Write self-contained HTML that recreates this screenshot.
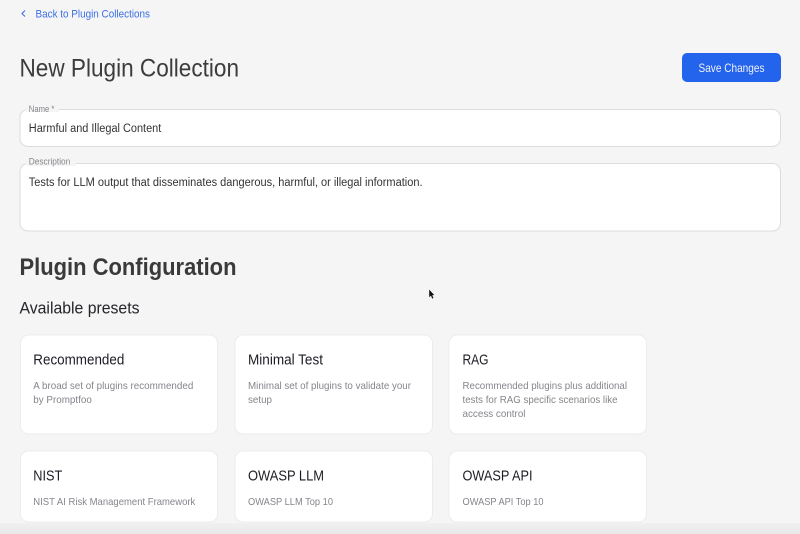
<!DOCTYPE html>
<html lang="en">
<head>
<meta charset="utf-8">
<title>New Plugin Collection</title>
<style>
html,body{margin:0;padding:0;background:#f5f5f5;width:800px;height:534px;overflow:hidden}
svg{display:block;position:absolute;left:0;top:0}
text{font-family:"Liberation Sans",sans-serif;white-space:pre}
.t{font-size:15px;fill:#1c1c24}
.d{font-size:10.5px;fill:#85858c}
.l{font-size:9px;fill:#85858a}
</style>
</head>
<body>
<svg width="800" height="534" viewBox="0 0 800 534" xmlns="http://www.w3.org/2000/svg">
<defs>
<linearGradient id="b" x1="0" y1="0" x2="0" y2="1">
<stop offset="0" stop-color="#f0f0f0"/>
<stop offset="1" stop-color="#e9e9e9"/>
</linearGradient>
</defs>
<rect width="800" height="534" fill="#f5f5f5"/>

<path d="M25 10.5 L22 13.5 L25 16.5" fill="none" stroke="#3a6fe6" stroke-width="1.1"/>
<text x="35.5" y="17.3" font-size="11" fill="#3a6fe6" textLength="114.5" lengthAdjust="spacingAndGlyphs">Back to Plugin Collections</text>

<text x="19.5" y="76.5" font-size="25" fill="#3c3c3c" textLength="219.5" lengthAdjust="spacingAndGlyphs">New Plugin Collection</text>

<rect x="682" y="53" width="99" height="29" rx="5" fill="#2463eb"/>
<text x="698.5" y="72" font-size="12" fill="#eef2fd" textLength="66" lengthAdjust="spacingAndGlyphs">Save Changes</text>

<rect x="20" y="109.5" width="760.5" height="37" rx="8" fill="#fff" stroke="#dcdcdc"/>
<rect x="26" y="107" width="33" height="5" fill="#f5f5f5"/>
<text x="28.8" y="112" class="l" textLength="25.5" lengthAdjust="spacingAndGlyphs">Name *</text>
<text x="28.8" y="132" font-size="11.5" fill="#333" textLength="132.5" lengthAdjust="spacingAndGlyphs">Harmful and Illegal Content</text>

<rect x="20" y="163.5" width="760.5" height="67.5" rx="8" fill="#fff" stroke="#dcdcdc"/>
<rect x="26" y="161" width="50" height="5" fill="#f5f5f5"/>
<text x="28.8" y="164.7" class="l" textLength="41.5" lengthAdjust="spacingAndGlyphs">Description</text>
<text x="28.8" y="186" font-size="11.5" fill="#333" textLength="393.7" lengthAdjust="spacingAndGlyphs">Tests for LLM output that disseminates dangerous, harmful, or illegal information.</text>

<text x="19.5" y="275" font-size="24" font-weight="700" fill="#3a3a3a" textLength="217" lengthAdjust="spacingAndGlyphs">Plugin Configuration</text>
<text x="19.5" y="313.5" font-size="16.5" fill="#24242a" textLength="120" lengthAdjust="spacingAndGlyphs">Available presets</text>

<g fill="#fff" stroke="#ececec">
<rect x="20.5" y="335" width="197" height="99" rx="8"/>
<rect x="235" y="335" width="197.5" height="99" rx="8"/>
<rect x="449" y="335" width="197.5" height="99" rx="8"/>
<rect x="20.5" y="451" width="197" height="71" rx="8"/>
<rect x="235" y="451" width="197.5" height="71" rx="8"/>
<rect x="449" y="451" width="197.5" height="71" rx="8"/>
</g>

<text x="33.3" y="364.6" class="t" textLength="91" lengthAdjust="spacingAndGlyphs">Recommended</text>
<text x="33.3" y="389" class="d" textLength="160" lengthAdjust="spacingAndGlyphs">A broad set of plugins recommended</text>
<text x="33.3" y="403" class="d" textLength="58.5" lengthAdjust="spacingAndGlyphs">by Promptfoo</text>

<text x="248" y="364.6" class="t" textLength="75" lengthAdjust="spacingAndGlyphs">Minimal Test</text>
<text x="248" y="389" class="d" textLength="163" lengthAdjust="spacingAndGlyphs">Minimal set of plugins to validate your</text>
<text x="248" y="403" class="d" textLength="24" lengthAdjust="spacingAndGlyphs">setup</text>

<text x="462.5" y="364.6" class="t" textLength="26" lengthAdjust="spacingAndGlyphs">RAG</text>
<text x="462.5" y="389" class="d" textLength="164.5" lengthAdjust="spacingAndGlyphs">Recommended plugins plus additional</text>
<text x="462.5" y="403" class="d" textLength="155" lengthAdjust="spacingAndGlyphs">tests for RAG specific scenarios like</text>
<text x="462.5" y="417" class="d" textLength="63" lengthAdjust="spacingAndGlyphs">access control</text>

<text x="33.3" y="480.6" class="t" textLength="29" lengthAdjust="spacingAndGlyphs">NIST</text>
<text x="33.3" y="505" class="d" textLength="162" lengthAdjust="spacingAndGlyphs">NIST AI Risk Management Framework</text>

<text x="248" y="480.6" class="t" textLength="76" lengthAdjust="spacingAndGlyphs">OWASP LLM</text>
<text x="248" y="505" class="d" textLength="85" lengthAdjust="spacingAndGlyphs">OWASP LLM Top 10</text>

<text x="462.5" y="480.6" class="t" textLength="70" lengthAdjust="spacingAndGlyphs">OWASP API</text>
<text x="462.5" y="505" class="d" textLength="81" lengthAdjust="spacingAndGlyphs">OWASP API Top 10</text>

<rect x="0" y="523" width="800" height="11" fill="url(#b)"/>

<path d="M429.2 289.6 L429.2 297.2 L431 295.6 L432.2 298.6 L433.4 298 L432.2 295.2 L434.2 295 Z" fill="#111"/>
</svg>
</body>
</html>
